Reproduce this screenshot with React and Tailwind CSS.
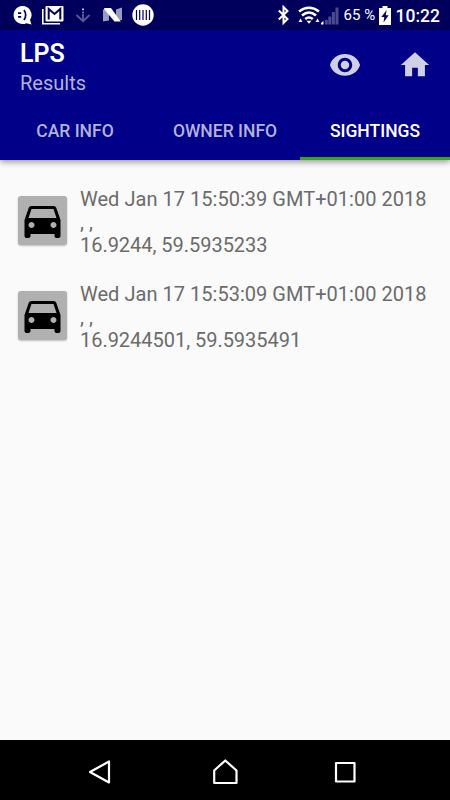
import React from "react";

const sightings = [
  { id: 1, date: "Wed Jan 17 15:50:39 GMT+01:00 2018", address: ", ,", position: "16.9244, 59.5935233" },
  { id: 2, date: "Wed Jan 17 15:53:09 GMT+01:00 2018", address: ", ,", position: "16.9244501, 59.5935491" },
];

const tabs = ["CAR INFO", "OWNER INFO", "SIGHTINGS"];

const StatusBar = () => (
  <div className="h-[30px] shrink-0 bg-[#00005c] flex items-center justify-between pl-[13px] pr-[10px] text-white">
    <div className="flex items-center">
      {/* Chat bubble */}
      <svg className="w-[19px] h-[20px]" viewBox="0 0 19 20">
        <path fill="#fff" d="M9.3 1a9 9 0 1 0 4 17.2L18.5 19.5 17 15A9 9 0 0 0 9.3 1z" />
        <path fill="none" stroke="#00005c" strokeWidth="1.7" d="M5 8.2h3.2M5 11.8h3.2M11 5q3.4 5 0 10" />
      </svg>
      {/* Mail stack */}
      <svg className="ml-[10px] w-[22px] h-[20px]" viewBox="0 0 22 20">
        <path fill="none" stroke="#fff" strokeWidth="1.6" d="M.8 4v14.8h17.2" />
        <path fill="#fff" d="M4.5 1h16a1 1 0 0 1 1 1v13.5a1 1 0 0 1-1 1h-16a1 1 0 0 1-1-1V2a1 1 0 0 1 1-1z" />
        <path fill="none" stroke="#00005c" strokeWidth="2" d="M6.7 14.5V4l5.8 5 5.8-5v10.5" />
      </svg>
      {/* Download arrow */}
      <svg className="ml-[11px] w-[16px] h-[18px]" viewBox="0 0 16 18">
        <path fill="none" stroke="#5b5b9b" strokeWidth="1.8" d="M8 8v7M1.5 9 8 15.2 14.5 9" />
        <path fill="#c4c4dc" d="M7 2.5h2v1.800H7z" />
        <path fill="#8080b4" d="M7 5.8h2v1.5H7z" />
      </svg>
      {/* Android N */}
      <svg className="ml-[12px] w-[19px] h-[16px]" viewBox="0 0 19 16">
        <path fill="#9a9ac4" d="M0 2.5l6-1v12l-6 1zM13 2.5l6-2v12.5l-6 1z" />
        <path fill="#fff" d="M1.5 1H8l9.7 13.5H11.5L1 2z" />
      </svg>
      {/* Barcode */}
      <svg className="ml-[10px] w-[22px] h-[22px]" viewBox="0 0 22 22">
        <circle cx="11" cy="11" r="10.7" fill="#fff" />
        <path stroke="#00005c" strokeWidth="1.2" d="M4.5 6v10M7.7 6v10M11 6v10M14.3 6v10M17.5 6v10" />
      </svg>
    </div>
    <div className="flex items-center">
      <svg className="w-[12px] h-[20px]" viewBox="0 0 12 20">
        <path fill="none" stroke="#fff" strokeWidth="2" d="M.8 5.5 9.5 14l-4 4V2l4 4L.8 14.5" />
      </svg>
      <svg className="ml-[8px] w-[22px] h-[20px]" viewBox="0 0 22 20">
        <path fill="none" stroke="#fff" strokeWidth="2.6" d="M1 6.5q10-7.5 20 0M4 10.5q7-6 14 0M7.2 14q3.8-3 7.6 0" />
        <path fill="#fff" d="M8.5 15.8h5L11 18.8zM2.5 13.5l2 3.5H.5zM19.500 13.5l2 3.5h-4z" />
      </svg>
      <svg className="ml-px w-[18px] h-[19px]" viewBox="0 0 18 19">
        <path fill="#4b4b8d" d="M4 14h2.8v4.5H4zM7.3 10.5h3v8h-3zM10.9 6h3v12.5h-3zM14.5 1.5h3v17h-3z" />
        <path fill="#fff" d="M0 18.5v-1.5L2.5 15v3.5z" />
      </svg>
      <span className="ml-[5px] w-[33px] text-[15px] leading-[30px] whitespace-nowrap">65 %</span>
      <svg className="ml-[2px] w-[12px] h-[19px]" viewBox="0 0 12 19">
        <path fill="#fff" d="M3.5 0h5v2H12v17H0V2h3.5z" />
        <path fill="#00005c" d="M7.7 4 2.3 11h3L4.5 16.5 9.7 9.2h-3z" />
      </svg>
      <span className="ml-[5px] pt-px text-[17.5px] leading-[30px] font-medium">10:22</span>
    </div>
  </div>
);

const CarIcon = () => (
  <div className="w-[49px] h-[49px] mt-[8px] rounded-[3px] bg-[#b0b0b0] shadow-[0_1px_2px_rgba(0,0,0,0.25)]">
    <svg className="w-[49px] h-12" viewBox="0 0 24.5 24">
      <path
        transform="translate(.25 0)"
        d="M18.92 6.01C18.72 5.42 18.16 5 17.5 5h-11c-.66 0-1.21.42-1.42 1.01L3 12v8c0 .55.45 1 1 1h1c.55 0 1-.45 1-1v-1h12v1c0 .55.45 1 1 1h1c.55 0 1-.45 1-1v-8l-2.08-5.99zM6.5 16c-.83 0-1.5-.67-1.5-1.5S5.67 13 6.5 13s1.5.67 1.5 1.5S7.33 16 6.5 16zm11 0c-.83 0-1.5-.67-1.5-1.5s.67-1.5 1.5-1.5 1.5.67 1.5 1.5-.67 1.5-1.5 1.5zM5 11l1.5-4.5h11L19 11H5z"
      />
    </svg>
  </div>
);

const App = () => {
  return (
    <div className="w-[450px] h-[800px] flex flex-col overflow-hidden bg-[#fafafa] font-['Roboto',sans-serif]">
      <StatusBar />

      {/* Toolbar and tabs */}
      <header className="h-[130px] shrink-0 flex flex-col bg-[#000088] shadow-[0_2px_6px_rgba(0,0,0,0.4)]">
        <div className="h-[70px] flex items-center justify-between pl-5 pr-[18px]">
          <div className="pt-[3px]">
            <h1 className="text-[25px] leading-[30px] font-semibold text-white">LPS</h1>
            <p className="mt-[2px] text-[20px] leading-[24px] text-[#b2b2db]">Results</p>
          </div>
          <div className="flex gap-[36px] text-[#cfcfe8]">
            <svg className="w-[34px] h-[34px]" viewBox="0 0 24 24" fill="currentColor">
              <path d="M12 4.3C7 4.3 2.5 7.61 1.4 12c1.1 4.39 5.6 7.6 10.6 7.6s9.5-3.21 10.6-7.6c-1.1-4.39-5.6-7.7-10.6-7.7zM12 17.1c-2.82 0-5.1-2.28-5.1-5.1s2.28-5.1 5.1-5.1 5.1 2.28 5.1 5.1-2.28 5.1-5.1 5.1zm0-8.1c-1.66 0-3 1.34-3 3s1.34 3 3 3 3-1.34 3-3-1.34-3-3-3z" />
            </svg>
            <svg className="w-[34px] h-[34px]" viewBox="0 0 24 24" fill="currentColor">
              <path d="M10 20v-6h4v6h5v-8h3L12 3 2 12h3v8z" />
            </svg>
          </div>
        </div>
        <nav className="h-[60px] grid grid-cols-3">
          {tabs.map((tab) => (
            <button
              key={tab}
              className={
                tab === "SIGHTINGS"
                  ? "pt-[5px] border-b-[3px] border-[#36a520] text-[17.5px] font-medium text-white"
                  : "pt-[5px] border-b-[3px] border-transparent text-[17.5px] font-medium text-[#b2b2db]"
              }
            >
              {tab}
            </button>
          ))}
        </nav>
      </header>

      <main className="flex-1 pt-[28px] pl-[18px] flex flex-col gap-[26px]">
        {sightings.map((item) => (
          <div key={item.id} className="flex gap-[13px]">
            <CarIcon />
            <div className="text-[20px] leading-[23px] text-[#6b6b6b] whitespace-nowrap">
              <p className="tracking-[0.03px]">{item.date}</p>
              <p>{item.address}</p>
              <p className="tracking-[-0.03px]">{item.position}</p>
            </div>
          </div>
        ))}
      </main>

      {/* Navigation bar */}
      <footer className="h-[60px] shrink-0 bg-black flex items-center pl-[87px] pt-[3px]">
        <svg className="w-[26px] h-[26px]" viewBox="0 0 26 26" fill="none" stroke="#fff" strokeWidth="2.2" strokeLinejoin="round">
          <path d="M3 13 22 2.5v21z" />
        </svg>
        <svg className="ml-[99px] w-[26px] h-[26px]" viewBox="0 0 26 26" fill="none" stroke="#fff" strokeWidth="2.2" strokeLinejoin="round">
          <path d="M2.2 11.5 13.3 1.5l11.2 10V24H2.2z" />
        </svg>
        <svg className="ml-[94px] w-[26px] h-[26px]" viewBox="0 0 26 26" fill="none" stroke="#fff" strokeWidth="2.2" strokeLinejoin="round">
          <path d="M4 4h18.5v18.5H4z" />
        </svg>
      </footer>
    </div>
  );
};

export default App;
